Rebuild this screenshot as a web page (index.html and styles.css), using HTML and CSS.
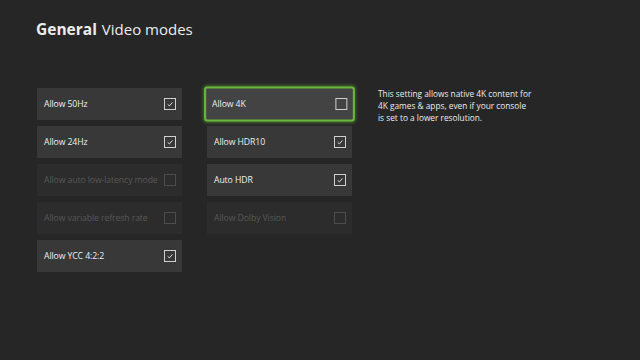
FILE: index.html
```html
<!DOCTYPE html>
<html>
<head>
<meta charset="utf-8">
<link rel="stylesheet" href="styles.css">
</head>
<body>
<header class="header">
  <span class="title-main">General</span>
  <span class="title-sub">Video modes</span>
</header>
<main class="content">
  <div class="column">
    <div class="tile"><span>Allow 50Hz</span><span class="box checked"><svg viewBox="0 0 12 12"><path d="M3.2 6.4 L5.2 8.3 L8.9 4.1"/></svg></span></div>
    <div class="tile"><span>Allow 24Hz</span><span class="box checked"><svg viewBox="0 0 12 12"><path d="M3.2 6.4 L5.2 8.3 L8.9 4.1"/></svg></span></div>
    <div class="tile disabled"><span>Allow auto low-latency mode</span><span class="box"></span></div>
    <div class="tile disabled"><span>Allow variable refresh rate</span><span class="box"></span></div>
    <div class="tile"><span>Allow YCC 4:2:2</span><span class="box checked"><svg viewBox="0 0 12 12"><path d="M3.2 6.4 L5.2 8.3 L8.9 4.1"/></svg></span></div>
  </div>
  <div class="column">
    <div class="tile focused"><span>Allow 4K</span><span class="box"></span></div>
    <div class="tile"><span>Allow HDR10</span><span class="box checked"><svg viewBox="0 0 12 12"><path d="M3.2 6.4 L5.2 8.3 L8.9 4.1"/></svg></span></div>
    <div class="tile"><span>Auto HDR</span><span class="box checked"><svg viewBox="0 0 12 12"><path d="M3.2 6.4 L5.2 8.3 L8.9 4.1"/></svg></span></div>
    <div class="tile disabled"><span>Allow Dolby Vision</span><span class="box"></span></div>
  </div>
  <p class="description">This setting allows native 4K content for 4K games &amp; apps, even if your console is set to a lower resolution.</p>
</main>
</body>
</html>
```
FILE: styles.css
```css
html, body {
  margin: 0;
  padding: 0;
}
body {
  width: 640px;
  height: 360px;
  background: #262626;
  color: #ececec;
  font-family: "Open Sans", "Noto Sans", sans-serif;
  overflow: hidden;
}
.header {
  padding: 17px 0 0 36px;
  height: 31px;
  display: flex;
  align-items: baseline;
  gap: 5px;
  line-height: 24px;
}
.title-main {
  font-size: 15.5px;
  font-weight: 700;
}
.title-sub {
  font-size: 15px;
  font-weight: 400;
}
.content {
  display: flex;
  align-items: flex-start;
  padding: 40px 0 0 37px;
  gap: 25px;
}
.column {
  width: 145px;
  display: flex;
  flex-direction: column;
  gap: 6px;
}
.tile {
  height: 32px;
  box-sizing: border-box;
  background: #383838;
  display: flex;
  align-items: center;
  justify-content: space-between;
  padding: 0 6px 0 7px;
  font-size: 8.7px;
  letter-spacing: -0.1px;
  color: #efefef;
}
.tile.disabled {
  background: #2c2c2c;
  color: #575757;
}
.tile.focused {
  background: #434343;
  border: 2px solid #6ab83b;
  border-radius: 3px;
  box-shadow: 0 0 3px 1px rgba(106, 184, 59, 0.45);
  transform: scale(1.04, 1.1);
  padding: 0 5px 0 5px;
}
.tile.focused .box {
  transform: scale(0.96, 0.91);
}
.tile.focused span:first-child {
  display: inline-block;
  transform: scale(0.96, 0.91);
}
.box {
  width: 12px;
  height: 12px;
  box-sizing: border-box;
  border: 1px solid #cfcfcf;
  flex: none;
  display: flex;
  align-items: center;
  justify-content: center;
}
.tile.disabled .box {
  border-color: #4c4c4c;
}
.box svg {
  width: 10px;
  height: 10px;
}
.box svg path {
  fill: none;
  stroke: #e8e8e8;
  stroke-width: 1.1;
}
.description {
  margin: 0 0 0 1px;
  width: 156px;
  font-size: 8.3px;
  line-height: 12px;
  color: #ececec;
  padding-top: 0;
}
```
